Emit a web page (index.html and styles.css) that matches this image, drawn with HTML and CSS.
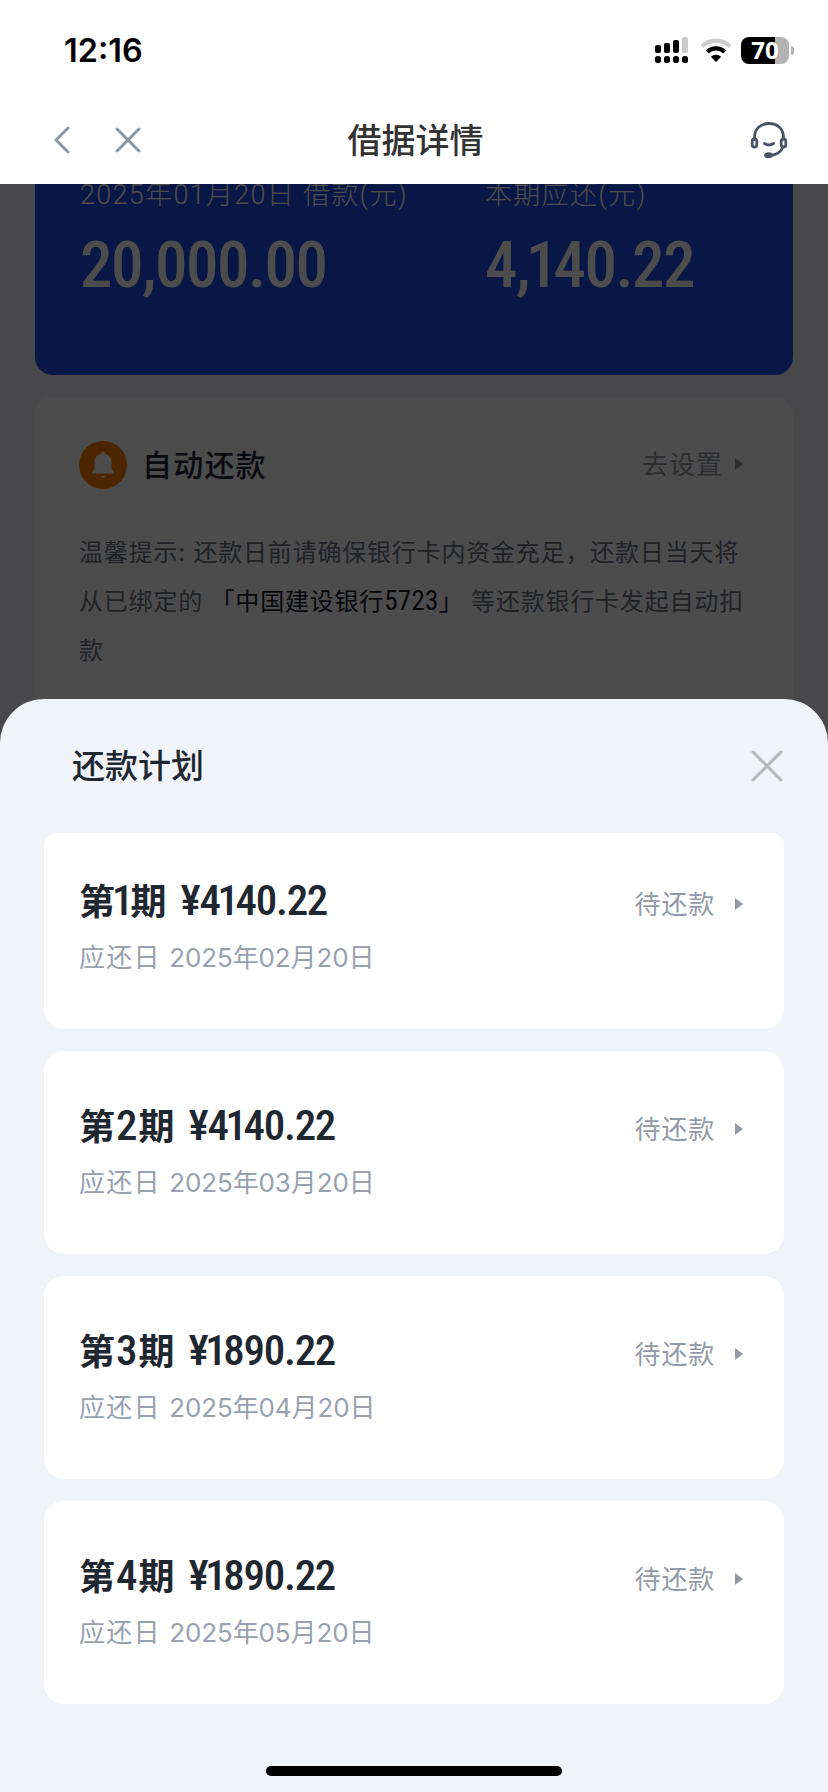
FILE: index.html
```html
<!DOCTYPE html>
<html lang="zh-CN">
<head>
  <meta charset="UTF-8">
  <title>借据详情</title>
  <link rel="stylesheet" href="styles.css">
</head>
<body>
  <header class="top">
    <div class="status-bar">
      <span class="time">12:16</span>
      <div class="status-icons">
        <svg class="signal" width="34" height="28" viewBox="0 0 34 28">
          <rect x="0" y="9" width="6" height="8" rx="2"/>
          <rect x="9" y="7" width="6" height="10" rx="2"/>
          <rect x="18" y="4" width="6" height="13" rx="2"/>
          <rect x="27" y="1" width="6" height="16" rx="2" fill="#ccc"/>
          <rect x="0" y="20" width="6" height="7" rx="2.5"/>
          <rect x="9" y="20" width="6" height="7" rx="2.5"/>
          <rect x="18" y="20" width="6" height="7" rx="2.5"/>
          <rect x="27" y="20" width="6" height="7" rx="2.5"/>
        </svg>
        <svg class="wifi" width="32" height="24" viewBox="0 0 32 24">
          <path d="M2 8.5 A20 20 0 0 1 30 8.5" fill="none" stroke="#ccc" stroke-width="4.4"/>
          <path d="M7.2 14 A12.6 12.6 0 0 1 24.8 14" fill="none" stroke="#000" stroke-width="4.4"/>
          <path d="M16 24 L10.8 18.8 A7.4 7.4 0 0 1 21.2 18.8 Z"/>
        </svg>
        <div class="battery"><span>70</span></div>
      </div>
    </div>
    <nav class="nav">
      <svg class="back" width="16" height="28" viewBox="0 0 16 28"><path d="M14 2 L2 14 L14 26"/></svg>
      <svg class="exit" width="26" height="26" viewBox="0 0 26 26"><path d="M2 2 L24 24 M24 2 L2 24"/></svg>
      <h1>借据详情</h1>
      <svg class="service" width="38" height="38" viewBox="0 0 38 38">
        <path d="M4.5 18 V16.5 C4.5 8 10.5 2.5 19 2.5 S33.5 8 33.5 16.5 V18"/>
        <rect x="2.2" y="18" width="4.6" height="8" rx="2.3"/>
        <rect x="31.2" y="18" width="4.6" height="8" rx="2.3"/>
        <path d="M14.5 22.5 Q19 25.5 23.5 22.5" stroke-width="3"/>
        <path d="M33 26 C31 31 26 34 20 34.5"/>
        <ellipse cx="18.5" cy="34.2" rx="3" ry="1.6" fill="#4b5563"/>
      </svg>
    </nav>
  </header>

  <main class="page">
    <section class="loan">
      <div class="loan-item">
        <p>2025年01月20日 借款(元)</p>
        <strong>20,000.00</strong>
      </div>
      <div class="loan-item">
        <p>本期应还(元)</p>
        <strong>4,<i>1</i>40.22</strong>
      </div>
    </section>
    <section class="auto">
      <div class="auto-head">
        <svg class="bell" width="48" height="48" viewBox="0 0 48 48">
          <circle cx="24" cy="24" r="24" fill="#ff8000"/>
          <path d="M24 10.5 C25.5 10.5 25.8 12 25.8 12.8 C30 13.8 32.5 17 32.5 21.5 V28 L35.5 32.5 H12.5 L15.5 28 V21.5 C15.5 17 18 13.8 22.2 12.8 C22.2 12 22.5 10.5 24 10.5 Z" fill="#fff"/>
          <path d="M21 35 H27 Q24 38 21 35 Z" fill="#fff"/>
        </svg>
        <h2>自动还款</h2>
        <span class="go">去设置</span>
        <span class="arrow"></span>
      </div>
      <p class="tip">温馨提示: 还款日前请确保银行卡内资金充足，还款日当天将<br>从已绑定的 <b>「中国建设银行<em>5723</em>」</b> 等还款银行卡发起自动扣<br>款</p>
    </section>
    <div class="mask"></div>
  </main>

  <section class="sheet">
    <div class="sheet-head">
      <h2>还款计划</h2>
      <svg width="32" height="32" viewBox="0 0 32 32"><path d="M2 2 L30 30 M30 2 L2 30"/></svg>
    </div>
    <ul class="plan">
      <li>
        <div class="info">
          <h3>第<em class="first">1</em>期<em class="sum">¥4<i>1</i>40.22</em></h3>
          <p>应还日 <span>2025年02月20日</span></p>
        </div>
        <span class="state">待还款</span>
        <span class="arrow"></span>
      </li>
      <li>
        <div class="info">
          <h3>第<em class="no">2</em>期<em class="sum">¥4<i>1</i>40.22</em></h3>
          <p>应还日 <span>2025年03月20日</span></p>
        </div>
        <span class="state">待还款</span>
        <span class="arrow"></span>
      </li>
      <li>
        <div class="info">
          <h3>第<em class="no">3</em>期<em class="sum">¥<i>1</i>890.22</em></h3>
          <p>应还日 <span>2025年04月20日</span></p>
        </div>
        <span class="state">待还款</span>
        <span class="arrow"></span>
      </li>
      <li>
        <div class="info">
          <h3>第<em class="no">4</em>期<em class="sum">¥<i>1</i>890.22</em></h3>
          <p>应还日 <span>2025年05月20日</span></p>
        </div>
        <span class="state">待还款</span>
        <span class="arrow"></span>
      </li>
    </ul>
    <div class="home-bar"></div>
  </section>
</body>
</html>
```
FILE: styles.css
```css
* { box-sizing: border-box; margin: 0; padding: 0; }
body { width: 828px; height: 1792px; overflow: hidden; background: #48484a; font-family: Inter, "Noto Sans CJK SC", sans-serif; display: flex; flex-direction: column; }
em, i { font-style: normal; }
ul { list-style: none; }

.top { height: 184px; flex: none; background: #fff; }
.status-bar { height: 96px; padding: 4px 34px 0 64px; display: flex; align-items: center; justify-content: space-between; }
.time { font-size: 32.4px; font-weight: 600; line-height: 40px; padding-top: 1px; }
.status-icons { display: flex; align-items: center; }
.wifi { margin-left: 11px; }
.battery { width: 48px; height: 27px; margin: 0 5px 0 9px; border-radius: 8px; background: linear-gradient(90deg, #000 70%, #b3b3b3 70%); position: relative; color: #fff; font: bold 24px/26px "Open Sans", sans-serif; text-align: center; }
.battery::after { content: ""; position: absolute; left: 50px; top: 9px; width: 3px; height: 9px; border-radius: 0 4px 4px 0; background: #b3b3b3; }
.nav { height: 88px; padding: 0 40px 0 54px; display: flex; align-items: center; }
.nav svg { fill: none; stroke: #8a95a3; stroke-width: 2.8; stroke-linecap: round; }
.nav .exit { margin-left: 45px; }
.nav .service { stroke: #4b5563; }
.nav h1 { flex: 1; padding-top: 2px; text-align: center; font-size: 34px; font-weight: 500; line-height: 40px; color: #333; margin-right: 60px; }

/* page behind the sheet */
.page { height: 565px; flex: none; padding: 0 35px; position: relative; background: #f1f2f8; }
.loan { height: 191px; padding-left: 45px; display: flex; background: #1d4de6; border-radius: 0 0 18px 18px; color: #fff; overflow: hidden; }
.loan-item { width: 405px; flex: none; }
.loan-item p { margin-top: -9px; font: 300 27px/40px Roboto, "Noto Sans CJK SC", sans-serif; letter-spacing: 1.3px; white-space: nowrap; }
.loan-item strong { display: block; margin-top: 12px; font: 500 65px/76px Roboto, sans-serif; font-stretch: 75%; letter-spacing: -1.5px; }
.auto { height: 352px; margin-top: 22px; padding: 44px 50px 0 44px; background: #fff; border-radius: 18px 18px 0 0; }
.auto-head { display: flex; align-items: center; height: 48px; }
.auto h2 { flex: 1; margin: -5px 0 0 15px; font-size: 30px; font-weight: 500; letter-spacing: 1.2px; color: #1f2632; }
.go { margin-top: -6px; font-size: 26px; color: #949aa5; letter-spacing: 1px; }
.arrow { width: 0; height: 0; border-left: 8px solid #949aa5; border-top: 6px solid transparent; border-bottom: 6px solid transparent; margin-left: 12px; }
.auto .arrow { margin-top: -3px; }
.tip { margin-top: 39px; font-size: 24px; line-height: 49px; letter-spacing: 0.8px; color: #6b7280; white-space: nowrap; }
.tip b { font-weight: 400; color: #111827; }
.tip em { font: 400 27px/1 Roboto, sans-serif; font-stretch: 75%; letter-spacing: 0.3px; }
.mask { position: absolute; inset: 0; background: rgba(0, 0, 0, 0.7); }

.sheet { flex: 1; margin-top: -50px; position: relative; background: #f0f3f8; border-radius: 44px 44px 0 0; }
.sheet-head { height: 134px; padding: 0 45px 0 72px; display: flex; align-items: center; justify-content: space-between; }
.sheet-head h2 { font-size: 33px; font-weight: 500; line-height: 40px; color: #1f2731; }
.sheet-head svg { fill: none; stroke: #b3b8be; stroke-width: 3; stroke-linecap: round; }
.plan { padding: 0 44px; }
.plan li { height: 203px; margin-bottom: 22px; padding: 52px 41px 0 35px; display: flex; align-items: flex-start; background: #fff; border-radius: 20px; }
.plan li:first-child { height: 196px; padding-top: 45px; border-radius: 12px 12px 20px 20px; }
.info { flex: 1; }
.plan h3 { font-size: 36px; font-weight: 700; line-height: 48px; color: #1f2731; white-space: nowrap; }
.plan h3 em { font: 500 43px/1 Roboto, sans-serif; font-stretch: 75%; }
.plan h3 .sum { margin-left: 14px; letter-spacing: -1.3px; }
.plan h3 .no { margin: 0 1px; }
.plan h3 .first { margin: 0 -3px; }
.plan h3 i, .loan-item i { margin: 0 -0.05em; }
.plan p { margin-top: 13px; font-size: 26px; line-height: 38px; letter-spacing: 1.2px; color: #9aa1ad; }
.plan p span { letter-spacing: -0.1px; }
.state { margin-top: 8px; font-size: 26px; line-height: 38px; letter-spacing: 0.8px; color: #949aa5; }
.plan .arrow { margin: 20px 0 0 20px; }
.home-bar { position: absolute; left: 266px; bottom: 16px; width: 296px; height: 10px; border-radius: 5px; background: #000; }
```
